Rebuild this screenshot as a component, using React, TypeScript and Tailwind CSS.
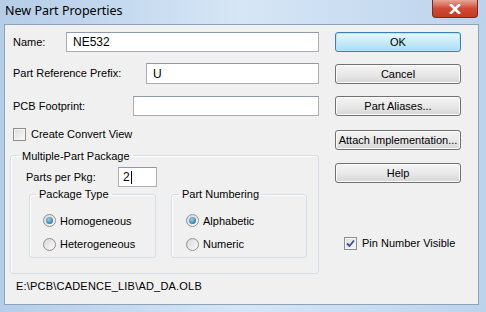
import React from "react";

const font = "font-['Liberation_Sans',Arial,sans-serif] text-[11px] text-black";

function Field({ label, inputClass, value }: { label: string; inputClass: string; value?: string }) {
  return (
    <div className="flex items-center">
      <span className="flex-1">{label}</span>
      <div
        className={`flex items-center border border-[#abadb3] border-t-[#8e9aa8] bg-white pl-[6px] text-[12px] ${inputClass}`}
      >
        {value}
      </div>
    </div>
  );
}

function Button({ children, primary }: { children: React.ReactNode; primary?: boolean }) {
  return (
    <div
      className={`flex h-[20px] w-[126px] items-center justify-center rounded-[3px] border ${
        primary
          ? "border-[#3c7fb1] bg-gradient-to-b from-[#e8f7fd] via-[#c6ebf9] to-[#a9def5] shadow-[inset_0_0_0_1px_#b5e7f9]"
          : "border-[#707070] bg-gradient-to-b from-[#f4f4f4] via-[#e9e9e9] to-[#d6d6d6] shadow-[inset_0_0_0_1px_#fcfcfc]"
      }`}
    >
      {children}
    </div>
  );
}

function Checkbox({ checked, label }: { checked?: boolean; label: string }) {
  return (
    <div className="flex items-center gap-[5px]">
      <div className="flex h-[13px] w-[13px] items-center justify-center border border-[#8e8f8f] bg-gradient-to-br from-[#dcdcdc] to-[#fafafa] shadow-[inset_0_0_0_1px_#f4f4f4]">
        {checked && (
          <svg width="9" height="9" viewBox="0 0 9 9">
            <path d="M1 4.5 L3.5 7 L8 1.5" fill="none" stroke="#3b4a8a" strokeWidth="1.8" />
          </svg>
        )}
      </div>
      <span>{label}</span>
    </div>
  );
}

function Radio({ checked, label }: { checked?: boolean; label: string }) {
  return (
    <div className="flex items-center gap-[4px]">
      <div className="flex h-[13px] w-[13px] items-center justify-center rounded-full border border-[#8e8f8f] bg-gradient-to-br from-[#d8d8d8] to-[#fbfbfb]">
        {checked && (
          <div className="h-[7px] w-[7px] rounded-full bg-[radial-gradient(circle_at_40%_35%,#8fd3f5,#1d5a86)]" />
        )}
      </div>
      <span>{label}</span>
    </div>
  );
}

export default function App() {
  return (
    <div className={`flex h-[312px] w-[486px] flex-col bg-gradient-to-r from-[#b5cde8] via-[#d6e6f6] to-[#bcd3ec] ${font}`}>
      <div className="flex h-[24px] shrink-0 items-start justify-between">
        <span className="pl-[5px] pt-[2px] font-['Noto_Sans',sans-serif] text-[12.5px] text-black">
          New Part Properties
        </span>
        <div className="mr-[8px] flex h-[18px] w-[46px] items-center justify-center rounded-b-[4px] border border-t-0 border-[#7a2a22] bg-gradient-to-b from-[#e6a596] via-[#cf4a34] to-[#c33b24]">
          <svg width="12" height="10" viewBox="0 0 12 10">
            <path d="M2 1 L10 9 M10 1 L2 9" stroke="#fff" strokeWidth="2.6" strokeLinecap="square" />
          </svg>
        </div>
      </div>

      <div className="mb-[7px] ml-[4px] mr-[7px] flex flex-1 border border-[#8da3bd] bg-[#f0f0f0]">
        <div className="flex w-[314px] flex-col pl-[5px] pt-[7px]">
          <div className="flex flex-col gap-[11px] pl-[3px]">
            <Field label="Name:" inputClass="h-[20px] w-[253px]" value="NE532" />
            <Field label="Part Reference Prefix:" inputClass="h-[21px] w-[173px]" value="U" />
            <div className="pt-[1px]">
              <Field label="PCB Footprint:" inputClass="h-[20px] w-[186px]" />
            </div>
          </div>
          <div className="mt-[10px] pl-[3px]">
            <Checkbox label="Create Convert View" />
          </div>

          <fieldset className="mt-[5px] h-[126px] rounded-[3px] border border-[#d5dfe5] shadow-[inset_1px_1px_0_#fff]">
            <legend className="ml-[8px] px-[3px]">Multiple-Part Package</legend>
            <div className="flex items-center pl-[15px] pt-[3px]">
              <span className="w-[92px]">Parts per Pkg:</span>
              <div className="flex h-[20px] w-[39px] items-center border border-[#abadb3] border-t-[#8e9aa8] bg-white pl-[4px] text-[12px]">
                2<span className="ml-[1px] h-[13px] w-[1px] bg-black" />
              </div>
            </div>
            <div className="mt-[-1px] flex justify-between pl-[18px] pr-[11px]">
              <fieldset className="h-[72px] w-[127px] rounded-[3px] border border-[#d5dfe5] shadow-[inset_1px_1px_0_#fff]">
                <legend className="ml-[6px] px-[3px]">Package Type</legend>
                <div className="mt-[10px] flex flex-col gap-[7px] pl-[13px]">
                  <Radio checked label="Homogeneous" />
                  <Radio label="Heterogeneous" />
                </div>
              </fieldset>
              <fieldset className="h-[72px] w-[136px] rounded-[3px] border border-[#d5dfe5] shadow-[inset_1px_1px_0_#fff]">
                <legend className="ml-[7px] px-[3px]">Part Numbering</legend>
                <div className="mt-[10px] flex flex-col gap-[7px] pl-[14px]">
                  <Radio checked label="Alphabetic" />
                  <Radio label="Numeric" />
                </div>
              </fieldset>
            </div>
          </fieldset>

          <div className="mt-[4px] pl-[6px] tracking-[0.2px]">E:\PCB\CADENCE_LIB\AD_DA.OLB</div>
        </div>

        <div className="flex flex-col pl-[16px] pt-[7px]">
          <div className="flex flex-col gap-[12px]">
            <Button primary>OK</Button>
            <Button>Cancel</Button>
            <Button>Part Aliases...</Button>
          </div>
          <div className="mt-[14px] flex flex-col gap-[13px]">
            <Button>Attach Implementation...</Button>
            <Button>Help</Button>
          </div>
          <div className="mt-[52px] pl-[9px]">
            <Checkbox checked label="Pin Number Visible" />
          </div>
        </div>
      </div>
    </div>
  );
}
